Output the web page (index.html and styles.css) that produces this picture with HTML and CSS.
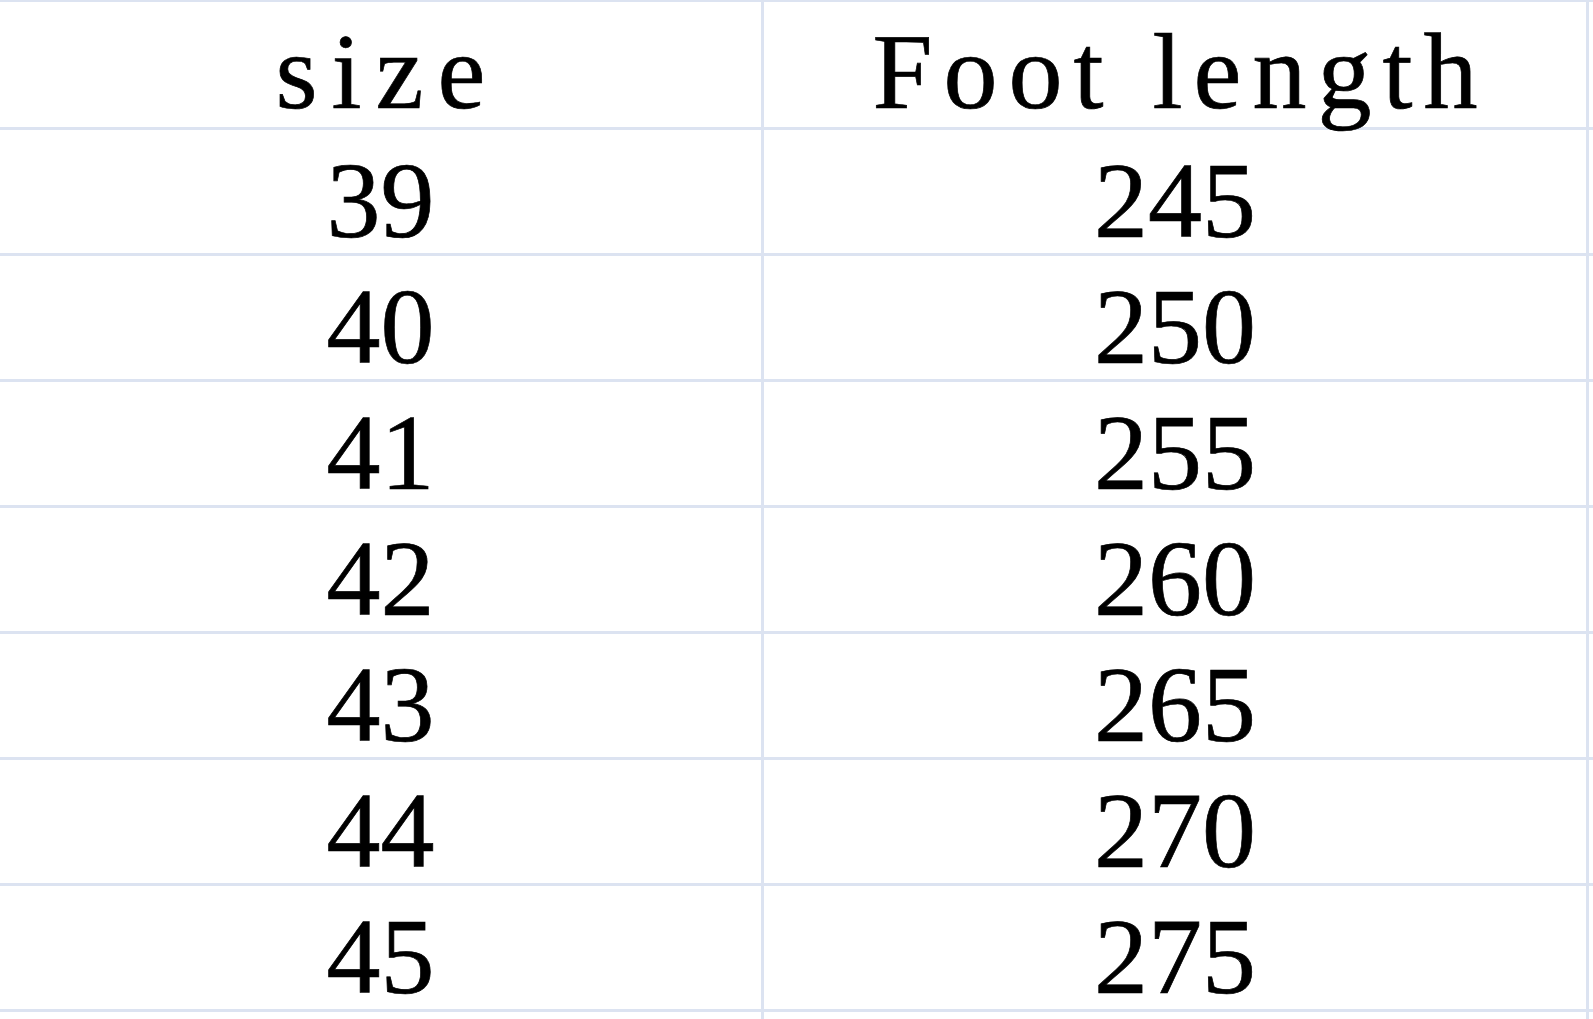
FILE: index.html
```html
<!DOCTYPE html>
<html>
<head>
<meta charset="utf-8">
<link rel="stylesheet" href="styles.css">
</head>
<body>
<table class="sheet">
  <colgroup>
    <col class="c-size">
    <col class="c-len">
    <col class="c-rest">
  </colgroup>
  <tr class="head"><td class="hdr-size">size</td><td class="hdr-len">Foot length</td><td></td></tr>
  <tr><td>39</td><td>245</td><td></td></tr>
  <tr><td>40</td><td>250</td><td></td></tr>
  <tr><td>41</td><td>255</td><td></td></tr>
  <tr><td>42</td><td>260</td><td></td></tr>
  <tr><td>43</td><td>265</td><td></td></tr>
  <tr><td>44</td><td>270</td><td></td></tr>
  <tr><td>45</td><td>275</td><td></td></tr>
  <tr class="tail"><td></td><td></td><td></td></tr>
</table>
</body>
</html>
```

FILE: styles.css
```css
html, body {
  margin: 0;
  padding: 0;
  background: #ffffff;
  overflow: hidden;
}

.sheet {
  border-collapse: collapse;
  table-layout: fixed;
  width: 1650px;
  margin-left: -3px;
  margin-top: -1px;
  font-family: "Liberation Serif", "Times New Roman", serif;
  font-size: 108px;
  color: #000000;
  -webkit-text-stroke: 0.7px #000000;
}

.c-size { width: 764px; }
.c-len { width: 825px; }
.c-rest { width: 61px; }

.sheet td {
  border: 3px solid #dce3f1;
  height: 102px;
  padding: 21px 0 0 0;
  box-sizing: content-box;
  vertical-align: top;
  text-align: center;
  line-height: 100px;
  white-space: nowrap;
}

.sheet .head td {
  height: 105px;
  padding-top: 20px;
}

.sheet td.hdr-size {
  letter-spacing: 14px;
  padding-left: 14px;
}

.sheet td.hdr-len {
  letter-spacing: 11px;
  padding-left: 11px;
}
```
